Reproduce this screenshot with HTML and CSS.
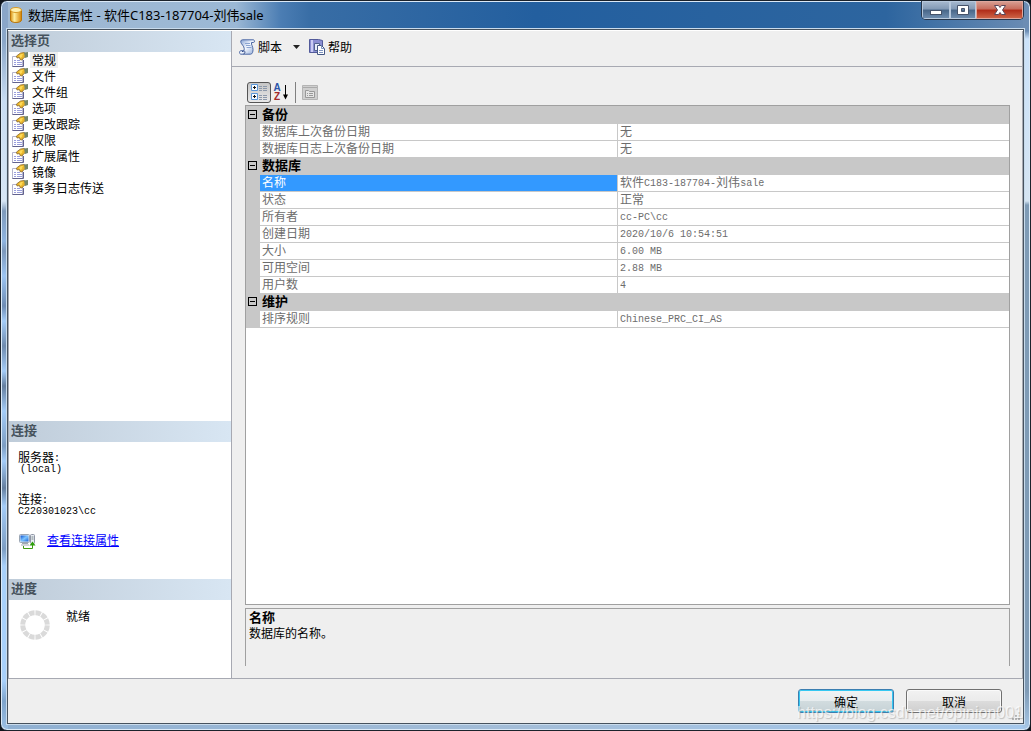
FILE: index.html
```html
<!DOCTYPE html>
<html lang="zh-CN">
<head>
<meta charset="utf-8">
<title>数据库属性</title>
<link rel="stylesheet" href="styles.css">
</head>
<body>
<svg class="defs" aria-hidden="true">
  <defs>
    <linearGradient id="gold" x1="0" x2="1" y1="0" y2="0"><stop offset="0" stop-color="#d98e10"/><stop offset=".35" stop-color="#fff0a0"/><stop offset="1" stop-color="#d58200"/></linearGradient>
    <linearGradient id="paper" x1="0" x2="1" y1="0" y2="1"><stop offset="0" stop-color="#7f9cd0"/><stop offset=".5" stop-color="#f4f8ff"/><stop offset="1" stop-color="#8fa9d6"/></linearGradient>
    <linearGradient id="screen" x1="0" x2="1" y1="0" y2="1"><stop offset="0" stop-color="#0a4fd0"/><stop offset=".5" stop-color="#7cc4ff"/><stop offset="1" stop-color="#1a62d8"/></linearGradient>
    <symbol id="page" viewBox="0 0 16 16">
      <path d="M.5 4.500h10v10H.5z" fill="#fff" stroke="#b4b4cc"/>
      <path d="M.5 14.500h11V8" fill="none" stroke="#62628e"/>
      <path d="M2 8.500h2M5 8.500h3M2 10.500h2M5 10.500h5M2 12.500h2M5 12.500h5" stroke="#9a9edc"/>
      <path d="M4.500 4l4-3 3.500-.5 1.500 1v3l-2 1.500-1.500 2-2-.5-.5-2-2.500.5z" fill="#eab52a" stroke="#8a6a30" stroke-width=".8"/>
      <path d="M7 4l2-2 2.500.5-2 1.500 1 .5-2 1.500" fill="#ffdc58"/>
      <path d="M12 .5l4-.5v5l-3 1z" fill="#74876a"/>
    </symbol>
  </defs>
</svg>
<div class="window">
  <header class="titlebar">
    <svg class="db-icon" viewBox="0 0 12 16" aria-hidden="true"><path d="M.5 3v10c0 3.300 11 3.300 11 0V3z" fill="url(#gold)" stroke="#b87408"/><ellipse cx="6" cy="3" rx="5.500" ry="2.500" fill="#fff0b0" stroke="#d79b28"/></svg>
    <h1 class="title">数据库属性 - 软件C183-187704-刘伟sale</h1>
    <div class="caption-buttons">
      <button class="cap" aria-label="最小化"><svg viewBox="0 0 14 12"><rect x="1.500" y="6.500" width="11" height="4" fill="#fff" stroke="#46536a"/></svg></button>
      <button class="cap cap-max" aria-label="最大化"><svg viewBox="0 0 14 12"><path d="M1.500 1.500h11v9h-11zM5.500 4.500h3v3h-3z" fill="#fff" fill-rule="evenodd" stroke="#46536a"/></svg></button>
      <button class="cap cap-close" aria-label="关闭"><svg viewBox="0 0 14 12"><path d="M1.500 1.500h4L7 3.500l1.500-2h4L9.500 6l3 4.500h-4L7 8.500l-1.500 2h-4l3-4.500z" fill="#fff" stroke="#5b4658"/></svg></button>
    </div>
  </header>
  <div class="client">
    <div class="main">
      <aside class="side">
        <section class="pages">
          <h2 class="side-head">选择页</h2>
          <ul class="page-list">
            <li><button class="page-item current"><svg><use href="#page"/></svg><span>常规</span></button></li>
            <li><button class="page-item"><svg><use href="#page"/></svg><span>文件</span></button></li>
            <li><button class="page-item"><svg><use href="#page"/></svg><span>文件组</span></button></li>
            <li><button class="page-item"><svg><use href="#page"/></svg><span>选项</span></button></li>
            <li><button class="page-item"><svg><use href="#page"/></svg><span>更改跟踪</span></button></li>
            <li><button class="page-item"><svg><use href="#page"/></svg><span>权限</span></button></li>
            <li><button class="page-item"><svg><use href="#page"/></svg><span>扩展属性</span></button></li>
            <li><button class="page-item"><svg><use href="#page"/></svg><span>镜像</span></button></li>
            <li><button class="page-item"><svg><use href="#page"/></svg><span>事务日志传送</span></button></li>
          </ul>
        </section>
        <section class="connection">
          <h2 class="side-head">连接</h2>
          <dl class="conn-info">
            <dt>服务器<span class="mono">:</span></dt>
            <dd class="mono indent">(local)</dd>
            <dt>连接<span class="mono">:</span></dt>
            <dd class="mono">C220301023\cc</dd>
          </dl>
          <p class="conn-link">
            <svg viewBox="0 0 17 17" aria-hidden="true">
              <rect x=".5" y="1.500" width="10" height="8" rx="1" fill="#dfe6ee" stroke="#9aa6b4"/><rect x="1.500" y="2.500" width="8" height="6" fill="url(#screen)"/>
              <path d="M3 10.500h6M2 12h8" stroke="#a0a8b2"/>
              <rect x="11.500" y="1.500" width="4" height="9" rx="1" fill="#e8ebf2" stroke="#8f96a5"/><path d="M12.500 4h2M12.500 6h2" stroke="#788"/>
              <path d="M4.500 13v2.500h9V11" fill="none" stroke="#3c9a10"/><path d="M10.500 12.500l3-4 3 4z" fill="#2e9e0c"/>
            </svg>
            <a href="#">查看连接属性</a>
          </p>
        </section>
        <section class="progress">
          <h2 class="side-head">进度</h2>
          <div class="status">
            <svg viewBox="0 0 30 30" aria-hidden="true"><circle cx="15" cy="15" r="12.300" fill="none" stroke="#dadada" stroke-width="5" pathLength="120" stroke-dasharray="8.500 1.500" stroke-dashoffset="-.75"/></svg>
            <span>就绪</span>
          </div>
        </section>
      </aside>
      <main class="content">
        <div class="toolbar">
          <button class="tool"><svg viewBox="0 0 16 16" aria-hidden="true"><path d="M3.500.8h11c1 0 1.500 2.700 0 2.700h-2c-.5 2 1.500 4 1.500 7 0 2-.5 4.700-2.500 4.700H2c-2 0-2-3.500 0-3.500h3c1-3-1-5-2.500-7C1.300 3 1.500.8 3.500.8z" fill="url(#paper)" stroke="#4d69a4"/><path d="M6 4.500h5M7 6.500h4.500M7.500 8.500h5" stroke="#8ba4d0"/><path d="M5 11.700c1.500 1 1 3-.5 3.300M3 12.500h1.500" fill="none" stroke="#324b87"/></svg>脚本</button>
          <button class="drop" aria-label="脚本选项"></button>
          <button class="tool"><svg viewBox="0 0 16 16" aria-hidden="true"><path d="M.5.500h9l4 1v12H.5z" fill="#8b8fd2" stroke="#525a9a"/><path d="M3 1v12" stroke="#dfe1ff" stroke-width="1.500"/><path d="M5.500 4.500h5v7h-5z" fill="#e8eefb" stroke="#52638e"/><path d="M8.500 6.500h4l3 3v6h-7z" fill="#fff" stroke="#465884"/><path d="M12.500 6.500v3h3M10 11.500h4M10 13.500h4" fill="none" stroke="#7d94bf"/></svg>帮助</button>
        </div>
        <div class="sheet">
          <div class="grid-tools">
            <button class="sort active" aria-label="按分类顺序"><svg viewBox="0 0 18 18" aria-hidden="true"><path d="M1.500 1.500h6v6h-6zM1.500 10.500h6v6h-6z" fill="#f7fbff" stroke="#5a96d8"/><path d="M3 4.500h3M4.500 3v3M3 13.500h3M4.500 12v3" stroke="#111"/><path d="M9 3.500h3M13 3.500h4M9 5.500h3M13 5.500h4M9 7.500h3M13 7.500h4M9 12.500h3M13 12.500h4M9 14.500h3M13 14.500h4M9 16.500h3M13 16.500h4" stroke="#8b98aa"/></svg></button>
            <button class="sort az" aria-label="按字母顺序"><span class="letters"><b>A</b><b class="z">Z</b></span><svg viewBox="0 0 7 16" aria-hidden="true"><path d="M3.500 1v12" stroke="#000"/><path d="M1 10.500h5l-2.500 5z"/></svg></button>
            <span class="sep"></span>
            <button class="sort pages-btn" aria-label="属性页" disabled><svg viewBox="0 0 16 15" aria-hidden="true"><path d="M.5.500h15v14H.5z" fill="#cfcfcf" stroke="#b4b4b4"/><path d="M1 2.500h14" stroke="#aaa"/><path d="M3.500 5.500h3l1 1h5v6h-9z" fill="#e5e5e5" stroke="#999"/><path d="M5 8.500h1M7 8.500h4M5 10.500h1M7 10.500h4" stroke="#999"/></svg></button>
          </div>
          <div class="grid">
            <table>
              <colgroup><col class="c-gutter"><col class="c-name"><col></colgroup>
              <tbody>
                <tr class="cat"><td><button class="fold" aria-label="折叠备份"></button></td><th colspan="2">备份</th></tr>
                <tr><td></td><th>数据库上次备份日期</th><td>无</td></tr>
                <tr><td></td><th>数据库日志上次备份日期</th><td>无</td></tr>
              </tbody>
              <tbody>
                <tr class="cat"><td><button class="fold" aria-label="折叠数据库"></button></td><th colspan="2">数据库</th></tr>
                <tr class="selected"><td></td><th>名称</th><td>软件<span class="mono">C183-187704-</span>刘伟<span class="mono">sale</span></td></tr>
                <tr><td></td><th>状态</th><td>正常</td></tr>
                <tr><td></td><th>所有者</th><td><span class="mono">cc-PC\cc</span></td></tr>
                <tr><td></td><th>创建日期</th><td><span class="mono">2020/10/6 10:54:51</span></td></tr>
                <tr><td></td><th>大小</th><td><span class="mono">6.00 MB</span></td></tr>
                <tr><td></td><th>可用空间</th><td><span class="mono">2.88 MB</span></td></tr>
                <tr><td></td><th>用户数</th><td><span class="mono">4</span></td></tr>
              </tbody>
              <tbody>
                <tr class="cat"><td><button class="fold" aria-label="折叠维护"></button></td><th colspan="2">维护</th></tr>
                <tr><td></td><th>排序规则</th><td><span class="mono">Chinese_PRC_CI_AS</span></td></tr>
              </tbody>
            </table>
          </div>
          <div class="help"><h3>名称</h3><p>数据库的名称。</p></div>
        </div>
      </main>
    </div>
    <footer class="footer">
      <button class="btn primary">确定</button>
      <button class="btn">取消</button>
      <svg class="grip" viewBox="0 0 9 9" aria-hidden="true"><path d="M6 0h2v2H6zM3 3h2v2H3zM6 3h2v2H6zM0 6h2v2H0zM3 6h2v2H3zM6 6h2v2H6z" fill="#b5b5b5"/></svg>
      <span class="watermark">https://blog.csdn.net/opinion001</span>
    </footer>
  </div>
</div>
</body>
</html>
```
FILE: styles.css
```css
* { box-sizing: border-box; }
body {
  margin: 0;
  background: #10151c;
  color: #000;
  font: 12px/16px "Noto Sans CJK SC", sans-serif;
}
h1, h2, h3, p, ul, dl, dd { margin: 0; padding: 0; }
button { font: inherit; color: inherit; border: 0; padding: 0; background: none; }
svg { display: block; flex: none; }
.defs { position: absolute; width: 0; height: 0; }
.mono { font-family: "Liberation Mono", monospace; font-size: 10px; }
span.mono { line-height: 1px; vertical-align: 1px; }

.window {
  display: flex;
  flex-direction: column;
  min-height: 100vh;
  padding: 0 6px 6px;
  border: 1px solid #1b222b;
  border-radius: 7px;
  background:
    linear-gradient(#8aa6c8, #8aa6c8 40px, #c8dcf2 100px, #d8e6f5 200px, #7f9abb 210px, #8fb4e0 240px, #7d98bb 250px, #9cc4f2 275px, #6e8cb4 305px, #a4ccf8 320px, #6f8bae 345px, #a4ccf8 370px, #657f9f 385px, #a4ccf8 410px, #7d9dc2 445px, #a4ccf8 460px, #657f9f 487px, #a4ccf8 505px, #7d9dc2 548px, #a8d0fa 565px, #a8d0fa 680px, #7ea4cc 700px, #9cc0e4) left / 7px 100% no-repeat,
    linear-gradient(#6c8db4 30px, #cbe2fa 38px, #d5e4f2 200px, #7f9bb6 204px, #7f9bb6 690px, #a8c8e8) right / 7px 100% no-repeat,
    linear-gradient(90deg, #8fb0d2, #a3bdd8 50%, #a5c8ec) bottom / 100% 7px no-repeat,
    linear-gradient(90deg, #9fb8d2, #9bb8d5 235px, #4b7db3 280px, #386da5 310px, #235f9f 52%, #2d659f 86%, #6c8db4);
  box-shadow: inset 0 0 0 1px #dbe9f7;
}
.titlebar { display: flex; align-items: flex-start; height: 28px; padding-left: 3px; }
.db-icon { width: 12px; height: 16px; margin: 6px 6px 0 0; }
.title { flex: 1; padding-top: 5px; font: 400 13px/18px "Noto Sans", "Noto Sans CJK SC", sans-serif; }
.caption-buttons {
  display: flex;
  height: 19px;
  border: 1px solid #26364b;
  border-top: 0;
  border-radius: 0 0 5px 5px;
  overflow: hidden;
}
.cap {
  display: grid;
  place-items: center;
  width: 28px;
  box-shadow: inset 0 0 0 1px #b7c8dc;
  background: linear-gradient(#a9bbd0, #8299b5 45%, #486688 50%, #7291b3);
}
.cap svg { width: 14px; height: 12px; }
.cap-max { width: 26px; }
.cap-close { width: 47px; box-shadow: inset 0 0 0 1px #dfa79d; background: linear-gradient(#d9a196, #c76c5c 45%, #b02b18 50%, #d0694a); }

.client {
  flex: 1;
  display: flex;
  flex-direction: column;
  border: 1px solid #46525e;
  box-shadow: 0 0 0 1px #c9dbec;
  background: #efefef;
}
.main { flex: 1; display: grid; grid-template-columns: 224px 1fr; border-top: 1px solid #fff; border-bottom: 1px solid #a7a9b2; }
.side { display: flex; flex-direction: column; border-right: 1px solid #a7a9b2; border-left: 1px solid #a7a9b2; background: #fff; }
.side-head {
  height: 21px;
  padding-left: 2px;
  font-size: 13px;
  line-height: 18px;
  color: #46525c;
  background: linear-gradient(90deg, #bfccd9, #d8e6f3);
}
.pages { flex: 1; }
.page-list { list-style: none; padding-left: 3px; }
.page-item { display: flex; gap: 2px; height: 16px; }
.page-item svg { width: 16px; height: 16px; }
.page-item span { padding: 0 2px; line-height: 16px; }
.page-item.current span { background: #efefef; }
.connection { height: 158px; }
.conn-info { padding: 8px 0 0 9px; }
.conn-info dt { height: 15px; line-height: 14px; }
.conn-info dd { height: 10px; line-height: 10px; margin-bottom: 17px; }
.conn-info .indent { padding-left: 2px; }
.conn-link { display: flex; gap: 11px; padding-left: 10px; margin-top: -2px; }
.conn-link svg { width: 17px; height: 17px; margin-top: 1px; }
.conn-link a { color: #00f; }
.progress { height: 99px; }
.status { display: flex; gap: 16px; padding: 8px 0 0 11px; }
.status svg { width: 30px; height: 30px; margin-top: 2px; }

.content { display: flex; flex-direction: column; min-width: 0; border-right: 1px solid #a7a9b2; }
.toolbar { display: flex; align-items: center; height: 36px; padding: 0 0 3px 7px; border-bottom: 1px solid #a7a9b2; }
.tool { display: flex; align-items: center; gap: 3px; }
.tool svg { width: 16px; height: 16px; }
.drop { width: 7px; height: 4px; margin: 0 9px 0 11px; background: #222; clip-path: polygon(0 0, 100% 0, 50% 100%); }
.sheet { flex: 1; display: flex; flex-direction: column; padding: 14px 12px 12px 13px; }
.grid-tools { display: flex; align-items: center; height: 22px; margin-bottom: 2px; padding-left: 2px; }
.sort { display: flex; align-items: center; justify-content: center; height: 21px; }
.sort.active { width: 24px; border: 1px solid #555; border-radius: 3px; background: linear-gradient(#c6c6c6, #e8e8e8); }
.active svg { width: 18px; height: 18px; }
.az { width: 20px; gap: 1px; }
.az svg { width: 7px; height: 16px; }
.letters { display: grid; font: 10px/9px "Liberation Sans", sans-serif; color: #2c55a8; }
.letters .z { color: #a32a2a; }
.sep { width: 1px; height: 21px; margin: 0 6px 0 4px; background: #808080; }
.pages-btn svg { width: 16px; height: 15px; }
.grid { flex: 1; border: 1px solid #a0a0a0; background: #fff; }
.grid table { width: 100%; border-collapse: separate; border-spacing: 0; border-top: 1px solid #c8c8c8; table-layout: fixed; }
.c-gutter { width: 14px; }
.c-name { width: 46.8%; }
.grid td, .grid th { height: 17px; padding: 0 2px; line-height: 14px; font-weight: 400; text-align: left; vertical-align: top; border-bottom: 1px solid #c8c8c8; color: #6d6d6d; white-space: nowrap; }
.grid td:first-child { background: #c8c8c8; }
.grid td:last-child { border-left: 1px solid #c8c8c8; }
.grid .cat td, .grid .cat th { background: #c8c8c8; color: #000; }
.grid .cat th { font-size: 13px; font-weight: 700; }
.grid .selected th { background: #3399ff; color: #fff; }
.fold { display: block; width: 9px; height: 9px; margin-top: 3px; border: 1px solid #000; background: linear-gradient(#000, #000) center / 5px 1px no-repeat; }
.help { height: 58px; margin-top: 3px; padding: 0 3px; border: 1px solid #a0a0a0; border-bottom: 0; }
.help h3 { font-size: 13px; line-height: 16px; }

.footer { position: relative; display: flex; justify-content: flex-end; gap: 12px; height: 44px; padding: 10px 21px 0 0; }
.btn { width: 96px; height: 24px; padding-top: 2px; border: 1px solid #707070; border-radius: 3px; box-shadow: inset 0 0 0 1px #fafafa; background: linear-gradient(#f2f2f2, #ebebeb 48%, #dcdcdc 50%, #cfcfcf); }
.primary { border-color: #3c7fb1; box-shadow: inset 0 0 0 1px #35c8f2; background: linear-gradient(#f0f3f4, #e6ecee 48%, #d2dcdf 50%, #c6d2d6); }
.grip { position: absolute; right: 2px; bottom: 2px; width: 9px; height: 9px; }
.watermark { position: absolute; right: 0; bottom: 0; font: 16px/20px "Liberation Sans", sans-serif; color: rgba(255, 255, 255, .7); text-shadow: 1px 1px 1px rgba(120, 120, 120, .4); pointer-events: none; }
```
